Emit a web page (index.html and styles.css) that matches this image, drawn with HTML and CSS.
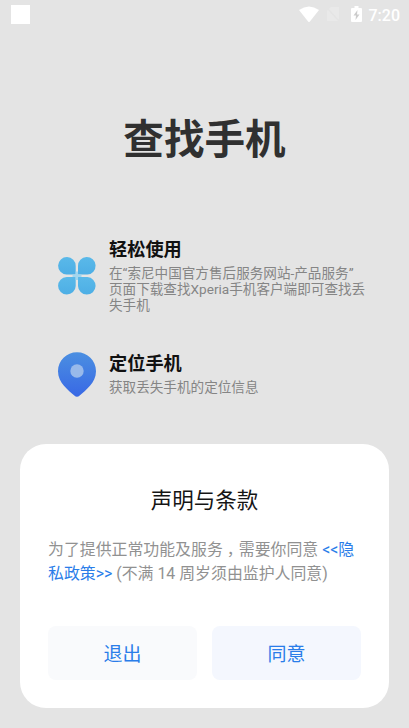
FILE: index.html
```html
<!DOCTYPE html>
<html lang="zh-CN">
<head>
<meta charset="utf-8">
<meta name="viewport" content="width=device-width, initial-scale=1">
<title>查找手机</title>
<link rel="stylesheet" href="styles.css">
</head>
<body>
<div class="screen">
  <header class="status">
    <span class="square"></span>
    <div class="tray">
      <svg class="wifi" width="20" height="17" viewBox="0 0 20 17"><path d="M0 4Q10-3 20 4L10.7 15.7Q10 16.5 9.3 15.7Z" fill="#fff"/></svg>
      <svg class="sim" width="14" height="17" viewBox="0 0 14 17"><path d="M5 1h8v14H1V5Z" fill="#e9e9e9"/><path d="M1 2l12 13" stroke="#e4e4e4" stroke-width="1.5"/></svg>
      <svg class="battery" width="11" height="17" viewBox="0 0 11 17"><path d="M3.5 0h4v2H10q1 0 1 1v12q0 1-1 1H1q-1 0-1-1V3q0-1 1-1h2.500Z" fill="#fff"/><path d="M6.500 4L2.500 9.500H5L4.500 14L8.500 8.500H6Z" fill="#ccc"/></svg>
      <span class="time">7:20</span>
    </div>
  </header>
  <main class="intro">
    <h1>查找手机</h1>
    <section class="feature">
      <svg class="icon" width="40" height="46" viewBox="0 0 40 46">
        <defs><linearGradient id="petal" x1="0" y1="0" x2="0" y2="1"><stop offset="0" stop-color="#5ab9e9"/><stop offset="1" stop-color="#4daee5"/></linearGradient></defs>
        <g fill="url(#petal)">
          <path d="M18.700 21.600H9.600A8.800 8.800 0 1 1 18.700 13Z"/>
          <path d="M21 21.600H30.400A8.800 8.800 0 1 0 21 13Z"/>
          <path d="M18.700 24H9.600A8.800 8.800 0 1 0 18.700 33Z"/>
          <path d="M21 24H30.400A8.800 8.800 0 1 1 21 33Z"/>
        </g>
        <path d="M15.500 22.800h9M19.850 18.500v8.500" stroke="#a2d6ee" stroke-width="2.400"/>
      </svg>
      <div class="copy">
        <h2>轻松使用</h2>
        <p>在“索尼中国官方售后服务网站-产品服务”<br>页面下载查找Xperia手机客户端即可查找丢<br>失手机</p>
      </div>
    </section>
    <section class="feature location">
      <svg class="icon" width="40" height="46" viewBox="0 0 40 46">
        <defs><linearGradient id="pin" x1="0" y1="0" x2="0" y2="1"><stop offset="0" stop-color="#4b8fe1"/><stop offset="1" stop-color="#3868e5"/></linearGradient></defs>
        <path d="M20 .3C9.500.3 1 8.500 1 19.200C1 31 11.500 38 17.300 43.600Q20 46 22.700 43.600C28.500 38 39 31 39 19.200C39 8.500 30.500.3 20 .3Z" fill="url(#pin)"/>
        <circle cx="20" cy="19" r="6.700" fill="#98b9ea"/>
      </svg>
      <div class="copy">
        <h2>定位手机</h2>
        <p>获取丢失手机的定位信息</p>
      </div>
    </section>
  </main>
  <section class="dialog">
    <h3>声明与条款</h3>
    <p>为了提供正常功能及服务<span class="comma">，</span>需要你同意 <a>&lt;&lt;隐<br>私政策&gt;&gt;</a> (不满 14 周岁须由监护人同意)</p>
    <div class="actions">
      <button class="exit">退出</button>
      <button class="agree">同意</button>
    </div>
  </section>
</div>
</body>
</html>
```
FILE: styles.css
```css
* { box-sizing: border-box; }
body { margin: 0; background: #e4e4e4; font-family: Roboto, "Noto Sans CJK SC", sans-serif; }
h1, h2, h3, p { margin: 0; white-space: nowrap; }
.screen { width: 409px; height: 728px; overflow: hidden; display: flex; flex-direction: column; }
.status { height: 32px; flex: none; display: flex; justify-content: space-between; padding: 5px 9px 0 11px; }
.square { width: 19px; height: 19px; background: #fff; }
.tray { display: flex; height: 20px; }
.tray svg { display: block; }
.wifi { margin-top: 1px; }
.sim { margin: 1px 0 0 7px; }
.battery { margin: 1px 0 0 11px; }
.time { margin-left: 7px; font-size: 16px; line-height: 21px; color: #fff; font-weight: 500; }
.intro { height: 412px; flex: none; padding-top: 78px; }
h1 { text-align: center; font-size: 40.6px; line-height: 60px; font-weight: 700; color: #303030; }
.feature { display: flex; padding: 0 0 0 57px; margin-top: 67px; }
.icon { flex: none; margin-top: 16px; }
.copy { margin-left: 12px; }
h2 { font-size: 18.2px; line-height: 26px; font-weight: 700; color: #111; }
.copy p { margin-top: 2px; font-size: 13.6px; line-height: 16px; color: #858585; }
.feature.location { margin-top: 38px; }
.location .icon { margin-top: 1px; }
.dialog { flex: none; width: 369px; height: 264px; margin-left: 20px; border-radius: 26px; background: #fff; padding: 41px 28px 28px; }
h3 { text-align: center; font-size: 21.5px; line-height: 32px; font-weight: 400; color: #151515; }
.dialog p { margin-top: 21px; font-size: 15.9px; line-height: 24px; color: #919191; }
.comma { font-feature-settings: "halt"; margin: 0 4px; }
.dialog a { color: #2a7de9; }
.actions { display: flex; justify-content: space-between; margin-top: 40px; }
button { width: 149px; height: 54px; border: 0; padding: 0; border-radius: 8px; font: 400 19px/54px "Noto Sans CJK SC", sans-serif; color: #2a7de9; }
.exit { background: #f9fafc; }
.agree { background: #f4f7fe; }
```
